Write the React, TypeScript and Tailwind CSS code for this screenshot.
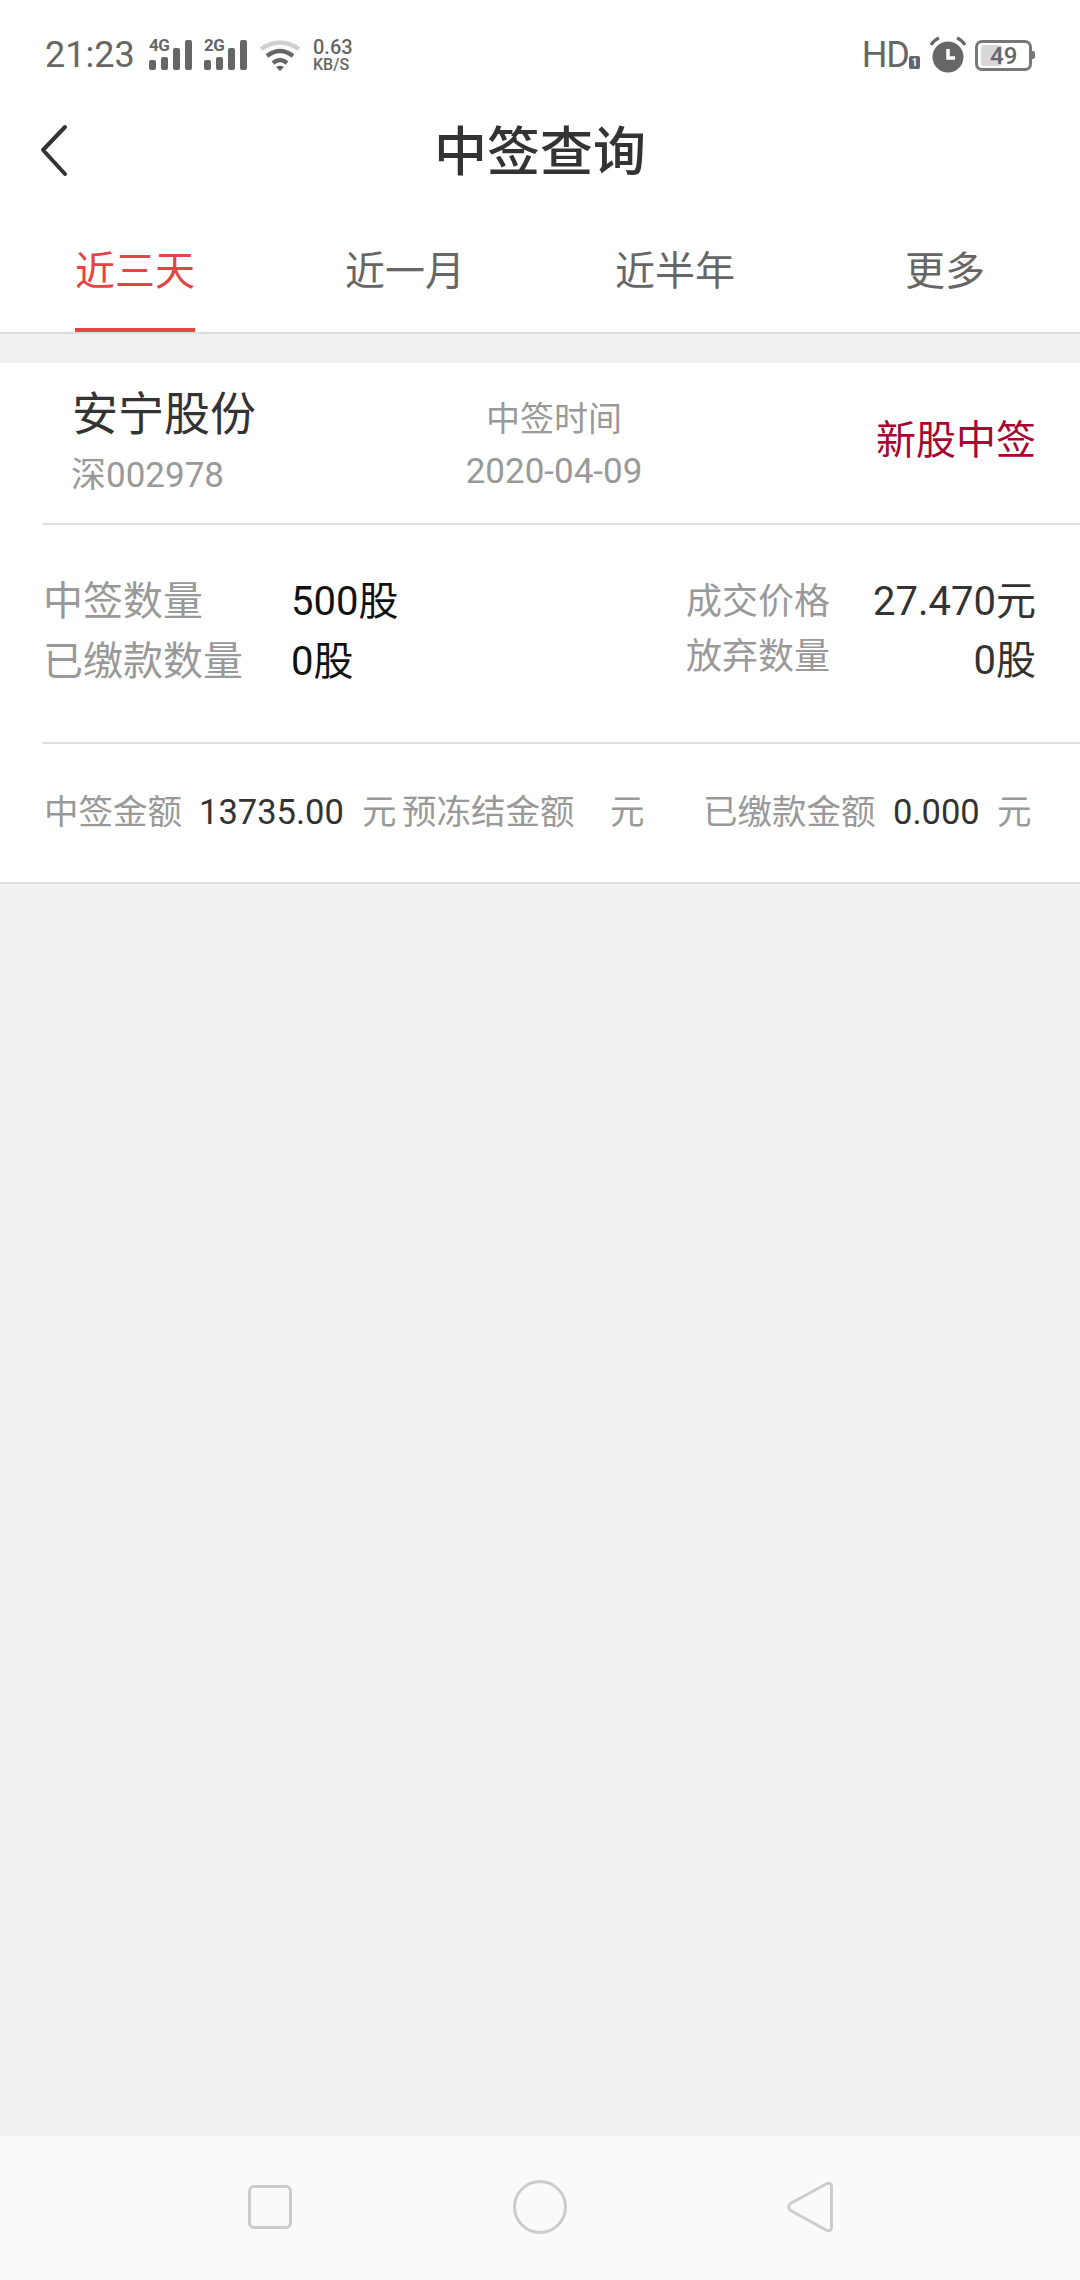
const font = '[font-family:Roboto,"Noto_Sans_CJK_SC",sans-serif]';

const tabs = ["近三天", "近一月", "近半年", "更多"];

const SignalIcon = ({ label }: { label: string }) => (
    <div className="shrink-0 relative w-[44px] h-[30px]">
        <span className="absolute left-0 top-[-3px] text-[17px] leading-[17px] font-bold text-[#666] tracking-[-0.5px]">{label}</span>
        <svg width="44" height="30" viewBox="0 0 44 30" className="absolute left-0 top-0" fill="#666">
            <rect x="0" y="20" width="7" height="10" rx="2" />
            <rect x="12" y="17" width="7" height="13" rx="2" />
            <rect x="24" y="8" width="7" height="22" rx="2" />
            <rect x="36" y="0" width="7" height="30" rx="2" />
        </svg>
    </div>
);

const WifiIcon = () => (
    <svg width="42" height="33" viewBox="0 0 42 33" fill="none" className="shrink-0">
        <path d="M2 10 Q21 -3 40 10" stroke="#d0d0d0" strokeWidth="4.500" />
        <path d="M8 17 Q21 7 34 17" stroke="#666" strokeWidth="4.500" />
        <path d="M14 24 Q21 18 28 24" stroke="#666" strokeWidth="4.500" />
        <path d="M17 28 Q21 25.500 25 28 L21 32 Z" fill="#666" />
    </svg>
);

const AlarmIcon = () => (
    <svg width="38" height="38" viewBox="0 0 38 38" fill="none" className="shrink-0">
        <circle cx="19" cy="21" r="15.500" fill="#666" />
        <path d="M19 13 V22 H26" stroke="#fff" strokeWidth="3.500" />
        <path d="M2 9 Q5 4 10 2" stroke="#666" strokeWidth="3" />
        <path d="M36 9 Q33 4 28 2" stroke="#666" strokeWidth="3" />
    </svg>
);

const Battery = () => (
    <div className="flex items-center shrink-0">
        <div className="relative w-[57px] h-[31px] border-[3px] border-[#777] rounded-[7px] flex items-center">
            <div className="ml-[3px] w-[21px] h-[21px] bg-[#d8d8d8] rounded-[3px]" />
            <span className="absolute left-[12px] top-[1px] text-[24px] leading-[24px] font-medium text-[#666]">49</span>
        </div>
        <div className="w-[3px] h-[8px] bg-[#777] rounded-r-[2px]" />
    </div>
);

const StatusBar = () => (
    <div className="h-[100px] flex items-center justify-between pl-[45px] pr-[45px] pt-[10px]">
        <div className="flex items-center">
            <span className="text-[36px] leading-[40px] text-[#666] w-[104px]">21:23</span>
            <SignalIcon label="4G" />
            <div className="w-[11px]" />
            <SignalIcon label="2G" />
            <div className="w-[11px]" />
            <WifiIcon />
            <div className="ml-[12px] flex flex-col text-[#666] font-medium">
                <span className="text-[20px] leading-[19px]">0.63</span>
                <span className="text-[16px] leading-[15px]">KB/S</span>
            </div>
        </div>
        <div className="flex items-center">
            <span className="text-[36px] leading-[40px] text-[#666] tracking-[-1px]">HD</span>
            <span className="w-[11px] h-[13px] mt-[14px] mr-[9px] bg-[#666] rounded-[2px] text-white text-[10px] leading-[13px] text-center font-bold">1</span>
            <AlarmIcon />
            <div className="w-[8px]" />
            <Battery />
        </div>
    </div>
);

const Field = ({ label, value }: { label: string; value: string }) => (
    <div className="flex items-center h-[60px]">
        <span className="w-[248px] text-[40px] leading-[60px] text-[#999]">{label}</span>
        <span className="text-[40px] leading-[60px] text-[#111]">{value}</span>
    </div>
);

const App = () => {
    return (
        <div className={`w-[1080px] h-[2280px] flex flex-col bg-[#f1f1f1] overflow-hidden ${font}`}>
            <div className="bg-white">
                <StatusBar />

                {/* Title */}
                <div className="relative h-[100px] flex items-center justify-center pt-[6px]">
                    <svg width="30" height="54" viewBox="0 0 30 54" fill="none" className="absolute left-[40px] top-[24px]">
                        <path d="M25 3 L3 26 L25 50" stroke="#333" strokeWidth="4" strokeLinecap="round" strokeLinejoin="round" />
                    </svg>
                    <h1 className="text-[53px] leading-[70px] font-medium text-[#333]">中签查询</h1>
                </div>

                {/* Tabs */}
                <div className="flex h-[134px] border-b-2 border-[#dddddd]">
                    {tabs.map((tab, index) => (
                        <div key={tab} className="flex-1 flex flex-col items-center">
                            <div className={`inline-flex flex-col items-center h-[132px] ${index === 0 ? "border-b-4 border-[#e34545]" : ""}`}>
                                <span className={`w-[120px] text-center pt-[44px] text-[40px] leading-[56px] ${index === 0 ? "text-[#e34545]" : "text-[#666]"}`}>
                                    {tab}
                                </span>
                            </div>
                        </div>
                    ))}
                </div>
            </div>

            {/* Card */}
            <div className="mt-[29px] bg-white border-b-2 border-[#dddddd]">
                <div className="ml-[42px] h-[162px] flex items-center border-b-2 border-[#e0e0e0]">
                    <div className="w-[425px] pl-[30px] pt-[4px]">
                        <div className="text-[46px] leading-[62px] text-[#333] mt-[-8px]">安宁股份</div>
                        <div className="text-[35px] leading-[46px] text-[#999] ml-[-1px] mt-[8px]">深002978</div>
                    </div>
                    <div className="w-[174px] flex flex-col items-center pt-[3px]">
                        <div className="text-[34px] leading-[50px] text-[#999]">中签时间</div>
                        <div className="text-[35px] leading-[46px] text-[#999] whitespace-nowrap mt-[5px]">2020-04-09</div>
                    </div>
                    <div className="flex-1 text-right pr-[44px] pb-[4px] text-[40px] leading-[56px] text-[#a80532]">新股中签</div>
                </div>

                <div className="ml-[42px] h-[219px] flex justify-between items-start pt-[47px] pr-[44px] border-b-2 border-[#e0e0e0]">
                    <div className="ml-[1px]">
                        <Field label="中签数量" value="500股" />
                        <Field label="已缴款数量" value="0股" />
                    </div>
                    <div className="w-[350px]">
                        <div className="flex justify-between h-[57px]">
                            <span className="text-[36px] leading-[60px] text-[#999]">成交价格</span>
                            <span className="text-[40px] leading-[60px] text-[#333]">27.470元</span>
                        </div>
                        <div className="flex justify-between">
                            <span className="text-[36px] leading-[56px] text-[#999]">放弃数量</span>
                            <span className="text-[40px] leading-[64px] text-[#333]">0股</span>
                        </div>
                    </div>
                </div>

                <div className="h-[138px] pb-[3px] pl-[44px] flex items-center text-[34.5px] leading-[46px] text-[#999]">
                    <span className="w-[155px]">中签金额</span>
                    <span className="w-[163px] text-[34.5px] text-[#333]">13735.00</span>
                    <span className="w-[40px]">元</span>
                    <span className="w-[208px]">预冻结金额</span>
                    <span className="w-[93px]">元</span>
                    <span className="w-[190px]">已缴款金额</span>
                    <span className="w-[104px] text-[#333]">0.000</span>
                    <span>元</span>
                </div>
            </div>

            <div className="flex-1" />

            {/* Nav bar */}
            <div className="h-[144px] bg-[#fafafa] flex items-center pb-[3px]">
                <div className="w-[248px]" />
                <div className="w-[44px] h-[44px] border-[3px] border-[#cccccc] rounded-[6px]" />
                <div className="w-[221px]" />
                <div className="w-[54px] h-[54px] border-[3px] border-[#cccccc] rounded-full" />
                <div className="w-[220px]" />
                <svg width="46" height="52" viewBox="0 0 46 52" fill="none">
                    <path
                        d="M40 2.500 Q44.500 1 44.500 6 V46 Q44.500 51 40 49.500 L3.500 29.500 Q0 26 3.500 22.500 Z"
                        stroke="#cccccc"
                        strokeWidth="3"
                        strokeLinejoin="round"
                    />
                </svg>
            </div>
        </div>
    );
};

export default App;
